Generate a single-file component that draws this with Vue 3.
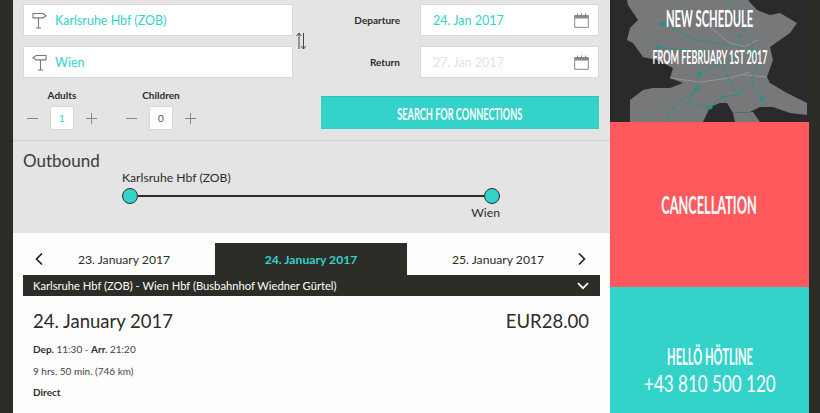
<template>
  <div class="page">
    <main class="main">
      <section class="search">
        <div class="fields">
          <div class="stops">
            <div class="field" v-for="(s, i) in stops" :key="s">
              <svg :class="['sign', { flip: i === 1 }]" width="15" height="17" viewBox="0 0 15 17"><path d="M1 1.500h10l3 2.200-3 2.200H1zM6.500 6v9.500M4 16h5" fill="none" stroke="#777" stroke-width="1.100"/></svg>
              <span class="value">{{ s }}</span>
            </div>
          </div>
          <svg class="swap" width="12" height="18" viewBox="0 0 12 18"><path d="M4 17V1M1.500 4 4 1l2.500 3M8.500 1v16M6 14l2.500 3 2.500-3" fill="none" stroke="#444" stroke-width="1"/></svg>
          <div class="dates">
            <div class="date-row" v-for="d in dates" :key="d.label">
              <label>{{ d.label }}</label>
              <div class="field date">
                <span :class="['value', { muted: d.muted }]">{{ d.value }}</span>
                <svg width="15" height="15" viewBox="0 0 15 15"><path d="M.7 2.500h13.600v11.800H.7z" fill="#fff" stroke="#888"/><path d="M.7 2.500h13.600v3H.7z" fill="#888"/><path d="M3.500 .5v3M7.500 .5v3M11.500 .5v3" stroke="#888"/></svg>
              </div>
            </div>
          </div>
        </div>
        <div class="bottom">
          <div class="steppers">
            <div class="stepper" v-for="p in passengers" :key="p.label">
              <b>{{ p.label }}</b>
              <div class="controls">
                <i class="minus"></i>
                <span :class="['count', { active: p.count > 0 }]">{{ p.count }}</span>
                <i class="plus"></i>
              </div>
            </div>
          </div>
          <button class="submit"><span class="hand">SEARCH FOR CONNECTIONS</span></button>
        </div>
      </section>

      <section class="outbound">
        <h2>Outbound</h2>
        <div class="route">
          <div class="from">Karlsruhe Hbf (ZOB)</div>
          <div class="track"><span class="dot"></span><span class="line"></span><span class="dot"></span></div>
          <div class="to">Wien</div>
        </div>
      </section>

      <section class="results">
        <div class="tabs">
          <svg class="chev" width="10" height="14" viewBox="0 0 10 14"><path d="M8 1.500 2.500 7 8 12.500" fill="none" stroke="#222" stroke-width="1.700"/></svg>
          <div v-for="t in days" :key="t.label" :class="['tab', { current: t.current }]">{{ t.label }}</div>
          <svg class="chev" width="10" height="14" viewBox="0 0 10 14"><path d="M2 1.500 7.500 7 2 12.500" fill="none" stroke="#222" stroke-width="1.700"/></svg>
        </div>
        <div class="line-bar">
          <span>Karlsruhe Hbf (ZOB) - Wien Hbf (Busbahnhof Wiedner Gürtel)</span>
          <svg width="12" height="8" viewBox="0 0 12 8"><path d="M1 1.200 6 6.200l5-5" fill="none" stroke="#fff" stroke-width="1.700"/></svg>
        </div>
        <div class="trip">
          <div class="trip-head"><span>24. January 2017</span><span>EUR28.00</span></div>
          <p class="first"><b>Dep.</b> 11:30 - <b>Arr.</b> 21:20</p>
          <p>9 hrs. 50 min. (746 km)</p>
          <p><b>Direct</b></p>
        </div>
      </section>
    </main>

    <aside class="side">
      <a class="tile map">
        <svg class="map-art" viewBox="0 0 199 122">
          <path d="M0 0h199v122H0z" fill="#2b2a2a"/>
          <path d="M17 0H138L147 10 160 15 170 13 187 23 180 33 170 40 160 47 163 60 157 77 160 83 177 93 197 103V115L180 113 163 107 150 107 140 112 123 113 117 103 110 103 100 107 93 122H20L20 100 33 90 43 88 60 88 73 83 60 78 63 68 47 60 33 57 23 43 17 40 20 28 28 20 18 5z" fill="#77787a"/>
          <path d="M123 113 143 112 150 122H125z" fill="#77787a"/>
          <path d="M100 27 120 43 135 47 147 40M60 78 90 82 120 78 140 72M133 75 157 77" fill="none" stroke="#a2a3a4" stroke-width=".7"/>
          <path d="M52 24 83 39 117 45 147 50 110 63 89 74 87 88 78 103 100 107 112 97 128 95 142 78 148 67 140 37 117 0M48 47 77 50 95 52 113 63 120 83 128 95M142 78 144 88 152 99M87 88 63 108 55 122M128 33 130 43" fill="none" stroke="#2f8f87" stroke-width="1"/>
          <g fill="#2f8f87"><circle cx="52" cy="24" r="2.500"/><circle cx="48" cy="47" r="2.500"/><circle cx="95" cy="52" r="2.200"/><circle cx="89" cy="74" r="2.500"/><circle cx="87" cy="88" r="2.500"/><circle cx="100" cy="107" r="2.500"/><circle cx="152" cy="99" r="2.500"/><circle cx="83" cy="39" r="1.300"/><circle cx="128" cy="95" r="1.300"/><circle cx="142" cy="78" r="1.300"/><circle cx="122" cy="83" r="1.300"/><circle cx="111" cy="96" r="1.300"/><circle cx="78" cy="103" r="1.300"/><circle cx="63" cy="108" r="1.300"/><circle cx="130" cy="36" r="1.300"/></g>
        </svg>
        <div class="map-text">
          <span class="hand schedule">NEW SCHEDULE</span>
          <span class="hand small">FROM FEBRUARY 1ST 2017</span>
        </div>
      </a>
      <a class="tile red"><span class="hand cancel">CANCELLATION</span></a>
      <a class="tile teal">
        <span class="hand hello">HELLÖ HÖTLINE</span>
        <span class="hand phone">+43 810 500 120</span>
      </a>
    </aside>
  </div>
</template>

<script setup>
const stops = ['Karlsruhe Hbf (ZOB)', 'Wien']
const dates = [
  { label: 'Departure', value: '24. Jan 2017' },
  { label: 'Return', value: '27. Jan 2017', muted: true }
]
const passengers = [
  { label: 'Adults', count: 1 },
  { label: 'Children', count: 0 }
]
const days = [
  { label: '23. January 2017' },
  { label: '24. January 2017', current: true },
  { label: '25. January 2017' }
]
</script>

<style>
html, body { margin: 0; background: #2d2d28; overflow: hidden; }
</style>

<style scoped>
.page {
  display: flex;
  height: 413px;
  padding: 0 11px 0 13px;
  overflow: hidden;
  font-family: Lato, "Open Sans", sans-serif;
  color: #2d2d28;
  background: #2d2d28;
}
.main { width: 597px; flex: none; }
.side { width: 199px; flex: none; display: flex; flex-direction: column; }

.search {
  height: 141px;
  box-sizing: border-box;
  padding: 4px 11px 0 10px;
  background: #e4e4e4;
  border-bottom: 1px solid #cfcfcf;
}
.fields { display: flex; height: 74px; }
.stops { width: 270px; display: flex; flex-direction: column; gap: 10px; }
.field {
  height: 32px;
  box-sizing: border-box;
  display: flex;
  align-items: center;
  background: #fff;
  border: 1px solid #d8d8d8;
}
.sign { margin: 0 8px 0 8px; flex: none; }
.sign.flip { transform: scaleX(-1); }
.value { color: #33d3c9; font-size: 12.500px; }
.value.muted { color: #e2e2e2; }
.swap { margin: 28px 0 0 2px; flex: none; }
.dates { margin-left: auto; width: 280px; display: flex; flex-direction: column; gap: 10px; }
.date-row { display: flex; align-items: center; }
.date-row label { width: 81px; text-align: right; font-size: 10px; font-weight: 700; margin-right: 20px; }
.date { flex: 1; justify-content: space-between; padding: 0 9px 0 12px; }

.bottom { display: flex; justify-content: space-between; margin-top: 18px; }
.steppers { display: flex; gap: 29px; margin-left: 4px; }
.stepper { width: 70px; text-align: center; }
.stepper b { display: block; font-size: 10px; line-height: 13px; margin-top: -7px; }
.controls { display: flex; align-items: center; justify-content: space-between; margin-top: 4px; }
.count {
  width: 24px;
  height: 24px;
  box-sizing: border-box;
  display: grid;
  place-items: center;
  background: #fff;
  border: 1px solid #d8d8d8;
  font-size: 10px;
  color: #555;
}
.count.active { color: #33d3c9; }
.minus, .plus { position: relative; width: 11px; height: 11px; display: block; }
.minus::before, .plus::before, .plus::after { content: ""; position: absolute; background: #888; }
.minus::before, .plus::before { left: 0; right: 0; top: 5px; height: 1px; }
.plus::after { top: 0; bottom: 0; left: 5px; width: 1px; }

.submit {
  width: 278px;
  height: 33px;
  padding: 0;
  border: 0;
  border-top: 1px solid #2cc4ba;
  background: #33d3c9;
  color: #fff;
  font-family: inherit;
}

.hand {
  display: inline-block;
  font-weight: 700;
  color: #fff;
  white-space: nowrap;
}
.submit .hand { font-size: 17px; transform: scaleX(.54); }

.outbound { height: 92px; position: relative; background: #e4e4e4; box-sizing: border-box; padding: 9px 10px 0; }
h2 { margin: 0; font-size: 17px; font-weight: 400; line-height: 22px; color: #3b3b38; }
.route { width: 378px; margin: -2px 0 0 99px; font-size: 12.200px; }
.from { line-height: 16px; }
.track { display: flex; align-items: center; margin-top: 2px; }
.dot { width: 14px; height: 14px; border: 1px solid #2d2d28; border-radius: 50%; background: #33d3c9; flex: none; }
.line { flex: 1; height: 2px; background: #2d2d28; }
.to { text-align: right; line-height: 16px; margin-top: 1px; }

.results { height: 180px; background: #fdfdfd; padding: 10px 10px 0; }
.tabs { display: flex; align-items: center; height: 32px; }
.chev { flex: none; }
.chev:first-child { margin-left: 11px; }
.tab { flex: none; width: 192px; height: 32px; line-height: 33px; text-align: center; font-size: 12.200px; color: #2d2d28; box-sizing: border-box; }
.tab:nth-child(2) { width: 171px; padding-right: 11px; }
.tab:nth-child(4) { width: 170px; padding-left: 12px; }
.tab.current { background: #2d2d28; color: #33d3c9; font-weight: 700; }
.line-bar {
  display: flex;
  align-items: center;
  justify-content: space-between;
  height: 21px;
  padding: 0 11px 0 10px;
  background: #2d2d28;
  color: #fff;
  font-size: 11.200px;
}
.trip { padding: 13px 11px 0 10px; }
.trip-head { display: flex; justify-content: space-between; font-size: 18.500px; line-height: 24px; }
.trip p { margin: 0; font-size: 10px; line-height: 12px; padding-top: 9.500px; color: #444; }
.trip p.first { padding-top: 10px; }
.trip p b { color: #2d2d28; }

.tile { display: flex; flex-direction: column; align-items: center; flex: none; }
.map { height: 122px; position: relative; overflow: hidden; }
.map-art { position: absolute; inset: 0; width: 100%; height: 100%; }
.map-text { position: relative; display: flex; flex-direction: column; align-items: center; }
.schedule { margin-top: 4px; font-size: 22px; line-height: 30px; transform: scaleX(.51); }
.small { margin-top: 12px; font-size: 18px; line-height: 22px; transform: scaleX(.5); }
.cancel { font-size: 24px; line-height: 30px; transform: scaleX(.53); }
.red { height: 165px; background: #ff595d; padding-top: 68px; box-sizing: border-box; }
.teal { height: 126px; background: #33d3c9; padding-top: 56px; box-sizing: border-box; }
.hello { font-size: 22px; line-height: 27px; transform: scaleX(.505); }
.phone { font-size: 23px; line-height: 27px; font-weight: 400; transform: scaleX(.74); }
</style>
